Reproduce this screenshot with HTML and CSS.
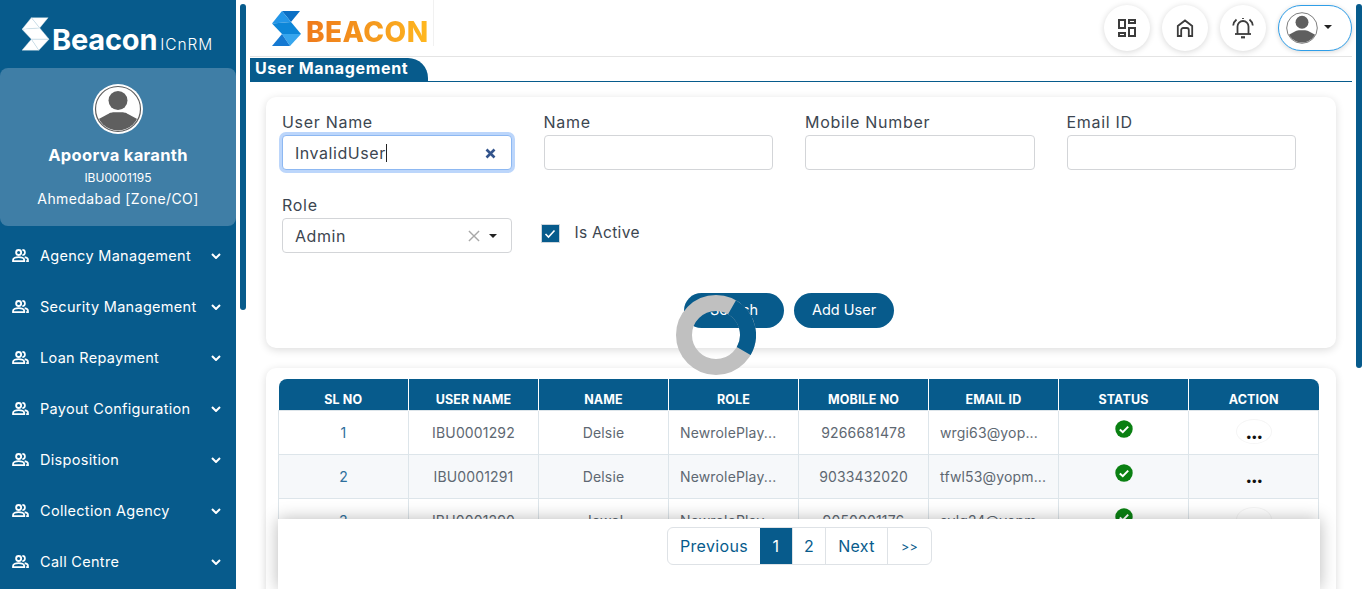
FILE: index.html
```html
<!DOCTYPE html>
<html lang="en">
<head>
    <meta charset="UTF-8">
    <meta name="viewport" content="width=device-width, initial-scale=1.0">
    <title>User Management</title>
    <link rel="stylesheet" href="styles.css">
</head>
<body>
<svg class="defs" width="0" height="0">
    <symbol id="people" viewBox="0 0 18 14">
        <circle cx="7" cy="3.800" r="2.700" fill="none" stroke="currentColor" stroke-width="2"/>
        <path d="M11 1a2.800 2.800 0 0 1 0 5.600" fill="none" stroke="currentColor" stroke-width="1.800"/>
        <path d="M1 13v-1.200c0-1.800 3-3 6-3s6 1.200 6 3V13z" fill="none" stroke="currentColor" stroke-width="2"/>
        <path d="M13.500 8.800c2 .3 3.600 1.300 3.600 3V13h-2" fill="none" stroke="currentColor" stroke-width="1.800"/>
    </symbol>
    <symbol id="chev" viewBox="0 0 10 6">
        <path d="M1 1l4 4 4-4" fill="none" stroke="currentColor" stroke-width="2"/>
    </symbol>
    <symbol id="avatar" viewBox="0 0 50 50">
        <defs><clipPath id="face"><circle cx="25" cy="25" r="21.500"/></clipPath></defs>
        <circle cx="25" cy="25" r="25" fill="#fff"/>
        <circle cx="25" cy="25" r="22.500" fill="#fff" stroke="#5f5f5f" stroke-width="1.200"/>
        <g clip-path="url(#face)" fill="#5f5f5f">
            <circle cx="25" cy="16.500" r="9.500"/>
            <path d="M0 38l16-8.500c2-1 3-1.200 9-1.200s7 .2 9 1.200L50 38v12H0z"/>
        </g>
    </symbol>
    <symbol id="tick" viewBox="0 0 18 18">
        <circle cx="9" cy="9" r="8.700" fill="#0a8012"/>
        <path d="M4.800 9.400l3 2.800 5.400-5.600" fill="none" stroke="#fff" stroke-width="2"/>
    </symbol>
</svg>

<div class="app">
    <aside class="sidebar">
        <div class="brand">
            <svg class="brand-mark" viewBox="0 0 30 35">
                <polygon points="10,0 28,0 19,11"/>
                <polygon points="10,0 19,11 0,12.500"/>
                <polygon points="0,12.500 19,11 29,23 10,23"/>
                <polygon points="29,23 10,23 18,35"/>
                <polygon points="10,23 0,35 18,35"/>
            </svg>
            <span class="brand-name">Beacon</span>
            <span class="brand-sub">ICnRM</span>
        </div>
        <div class="profile">
            <svg class="profile-pic"><use href="#avatar"/></svg>
            <div class="profile-name">Apoorva karanth</div>
            <div class="profile-id">IBU0001195</div>
            <div class="profile-loc">Ahmedabad [Zone/CO]</div>
        </div>
        <nav class="menu">
            <a class="menu-item"><svg class="menu-icon"><use href="#people"/></svg><span>Agency Management</span><svg class="menu-chev"><use href="#chev"/></svg></a>
            <a class="menu-item"><svg class="menu-icon"><use href="#people"/></svg><span>Security Management</span><svg class="menu-chev"><use href="#chev"/></svg></a>
            <a class="menu-item"><svg class="menu-icon"><use href="#people"/></svg><span>Loan Repayment</span><svg class="menu-chev"><use href="#chev"/></svg></a>
            <a class="menu-item"><svg class="menu-icon"><use href="#people"/></svg><span>Payout Configuration</span><svg class="menu-chev"><use href="#chev"/></svg></a>
            <a class="menu-item"><svg class="menu-icon"><use href="#people"/></svg><span>Disposition</span><svg class="menu-chev"><use href="#chev"/></svg></a>
            <a class="menu-item"><svg class="menu-icon"><use href="#people"/></svg><span>Collection Agency</span><svg class="menu-chev"><use href="#chev"/></svg></a>
            <a class="menu-item"><svg class="menu-icon"><use href="#people"/></svg><span>Call Centre</span><svg class="menu-chev"><use href="#chev"/></svg></a>
        </nav>
    </aside>
    <div class="scroll-side"><div class="scroll-thumb thumb-side"></div></div>

    <main class="main">
        <header class="topbar">
            <div class="logo">
                <svg class="logo-mark" viewBox="0 0 30 35">
                    <polygon fill="#0b6fc4" points="10,0 28,0 19,11"/>
                    <polygon fill="#2396e8" points="10,0 19,11 0,12.500"/>
                    <polygon fill="#0d86d8" points="0,12.500 19,11 29,23 10,23"/>
                    <polygon fill="#37a6ee" points="29,23 10,23 18,35"/>
                    <polygon fill="#1579d2" points="10,23 0,35 18,35"/>
                </svg>
                <span class="logo-text">BEACON</span>
            </div>
            <div class="top-actions">
                <button class="round-btn">
                    <svg width="18" height="18" viewBox="0 0 18 18" fill="none" stroke="#3c3c3c" stroke-width="2"><rect x="1" y="1" width="6" height="8"/><rect x="11" y="1" width="6" height="3"/><rect x="1" y="14" width="6" height="3"/><rect x="11" y="9" width="6" height="8"/></svg>
                </button>
                <button class="round-btn">
                    <svg width="18" height="18" viewBox="0 0 18 18" fill="none" stroke="#3c3c3c" stroke-width="1.800"><path d="M1.800 17V7L9 1.500 16.200 7v10h-3.400v-6a2 2 0 0 0-2-2H7.200a2 2 0 0 0-2 2v6z"/></svg>
                </button>
                <button class="round-btn">
                    <svg width="22" height="22" viewBox="0 0 22 22" fill="none" stroke="#3c3c3c" stroke-width="1.800"><path d="M5.500 17V9.500a5.500 5.500 0 0 1 11 0V17"/><path d="M3 17h16"/><path d="M9 20.300h4" stroke-width="2.200"/><path d="M11 2V1"/><path d="M4.500 2.500A9 9 0 0 0 1.200 8.500M17.500 2.500a9 9 0 0 1 3.300 6"/></svg>
                </button>
                <button class="user-btn">
                    <svg class="user-pic"><use href="#avatar"/></svg>
                    <span class="caret"></span>
                </button>
            </div>
        </header>

        <div class="title-row"><h1 class="page-title">User Management</h1></div>

        <section class="card filter-card">
            <div class="filter-form">
                <div class="filter-grid">
                    <div class="field">
                        <label>User Name</label>
                        <div class="input focused"><span class="input-val">InvalidUser</span><span class="cursor"></span>
                            <svg class="clear" width="11" height="11" viewBox="0 0 11 11"><path d="M1.500 1.500l8 8M9.500 1.500l-8 8" stroke="#33548c" stroke-width="2.600"/></svg>
                        </div>
                    </div>
                    <div class="field"><label>Name</label><div class="input"></div></div>
                    <div class="field"><label>Mobile Number</label><div class="input"></div></div>
                    <div class="field"><label>Email ID</label><div class="input"></div></div>
                    <div class="field">
                        <label>Role</label>
                        <div class="input"><span class="input-val">Admin</span>
                            <svg class="select-x" width="12" height="12" viewBox="0 0 13 13"><path d="M1 1l11 11M12 1L1 12" stroke="#a8a8a8" stroke-width="1.500"/></svg>
                            <span class="caret select-caret"></span>
                        </div>
                    </div>
                    <div class="check-field">
                        <span class="checkbox"><svg width="12" height="10" viewBox="0 0 12 10"><path d="M1.500 5l3 3 6-6.500" fill="none" stroke="#fff" stroke-width="1.600"/></svg></span>
                        <span class="check-label">Is Active</span>
                    </div>
                </div>
                <div class="form-actions">
                    <button class="btn">Search</button>
                    <button class="btn">Add User</button>
                </div>
            </div>
        </section>

        <section class="card table-card">
            <table class="grid">
                <thead>
                    <tr><th>SL NO</th><th>USER NAME</th><th>NAME</th><th>ROLE</th><th>MOBILE NO</th><th>EMAIL ID</th><th>STATUS</th><th>ACTION</th></tr>
                </thead>
                <tbody>
                    <tr>
                        <td class="link">1</td><td>IBU0001292</td><td>Delsie</td><td class="left">NewrolePlay...</td><td>9266681478</td><td class="left">wrgi63@yop...</td>
                        <td class="status"><svg class="tick"><use href="#tick"/></svg></td>
                        <td class="action"><span class="dots dots-ring">•••</span></td>
                    </tr>
                    <tr>
                        <td class="link">2</td><td>IBU0001291</td><td>Delsie</td><td class="left">NewrolePlay...</td><td>9033432020</td><td class="left">tfwl53@yopm...</td>
                        <td class="status"><svg class="tick"><use href="#tick"/></svg></td>
                        <td class="action"><span class="dots">•••</span></td>
                    </tr>
                    <tr>
                        <td class="link">3</td><td>IBU0001290</td><td>Jewel</td><td class="left">NewrolePlay...</td><td>9050001176</td><td class="left">sylg24@yopm...</td>
                        <td class="status"><svg class="tick"><use href="#tick"/></svg></td>
                        <td class="action"><span class="dots dots-ring">•••</span></td>
                    </tr>
                </tbody>
            </table>
        </section>

        <div class="pager-bar">
            <div class="pager">
                <a class="pg pg-prev">Previous</a>
                <a class="pg pg-num active">1</a>
                <a class="pg pg-num">2</a>
                <a class="pg pg-next">Next</a>
                <a class="pg pg-last">&gt;&gt;</a>
            </div>
        </div>

        <svg class="spinner" width="80" height="80" viewBox="0 0 80 80">
            <circle cx="40" cy="40" r="32" fill="none" stroke="#c0c0c0" stroke-width="16"/>
            <circle class="spinner-arc" cx="40" cy="40" r="32" fill="none" stroke="#075b8c" stroke-width="16" stroke-dasharray="50.300 151"/>
        </svg>
    </main>
    <div class="scroll-main"><div class="scroll-thumb thumb-main"></div></div>
</div>
</body>
</html>
```

FILE: styles.css
```css
/* Page frame */
* {
    box-sizing: border-box;
}
html, body {
    height: 100%;
}
body {
    margin: 0;
    font-family: Inter, "Open Sans", sans-serif;
    color: #3c4650;
    background: #fff;
    overflow: hidden;
}
.defs {
    position: absolute;
}
.app {
    display: flex;
    height: 100vh;
    overflow: hidden;
}

/* Sidebar */
.sidebar {
    width: 236px;
    flex: none;
    background: #075b8c;
    color: #fff;
    overflow: hidden;
}
.brand {
    height: 68px;
    display: flex;
    align-items: flex-end;
    padding: 0 0 17px 22px;
}
.brand-mark {
    width: 28px;
    height: 34px;
    fill: #fff;
    stroke: #cfe0ea;
    stroke-width: 0.400;
    flex: none;
}
.brand-name {
    font-size: 29px;
    font-weight: 700;
    line-height: 30px;
    margin: 0 0 -4px 2px;
    letter-spacing: -0.200px;
}
.brand-sub {
    font-size: 15.500px;
    font-weight: 300;
    margin: 0 0 -5px 3px;
    line-height: 22px;
    letter-spacing: 0.900px;
}
.profile {
    height: 158px;
    background: #3f7ea6;
    border-radius: 8px;
    display: flex;
    flex-direction: column;
    align-items: center;
    padding-top: 16px;
}
.profile-pic {
    width: 50px;
    height: 50px;
}
.profile-name {
    font-size: 16.500px;
    font-weight: 700;
    margin-top: 11px;
    line-height: 20px;
    letter-spacing: 0.300px;
}
.profile-id {
    font-size: 12px;
    margin-top: 4px;
    line-height: 18px;
}
.profile-loc {
    font-size: 14px;
    margin-top: 2px;
    line-height: 20px;
    letter-spacing: 0.400px;
}
.menu {
    padding-top: 4px;
}
.menu-item {
    display: flex;
    align-items: center;
    height: 51px;
    padding: 0 15px 0 12px;
    font-size: 14.500px;
    letter-spacing: 0.300px;
}
.menu-icon {
    width: 17px;
    height: 13px;
    margin-right: 11px;
    flex: none;
}
.menu-chev {
    width: 10px;
    height: 6px;
    margin-left: auto;
    flex: none;
}

/* Scrollbars */
.scroll-side {
    width: 14px;
    flex: none;
    padding: 4px 4px 0;
}
.scroll-main {
    width: 14px;
    flex: none;
    padding: 4px 4px 0;
}
.scroll-thumb {
    width: 6px;
    background: #075b8c;
    border-radius: 3px;
}
.thumb-side {
    height: 306px;
}
.thumb-main {
    height: 364px;
}

/* Main column */
.main {
    position: relative;
    flex: 1;
    min-width: 0;
}
.topbar {
    height: 57px;
    display: flex;
    align-items: flex-start;
    justify-content: space-between;
    border-bottom: 1px solid #e4e4e4;
}
.logo {
    display: flex;
    align-items: center;
    height: 46px;
    width: 184px;
    padding: 10px 0 0 22px;
    border-right: 1px solid #f1f1f1;
}
.logo-mark {
    width: 30px;
    height: 35px;
    flex: none;
}
.logo-text {
    font-size: 28px;
    font-weight: 800;
    margin: 8px 0 0 4px;
    letter-spacing: 0.450px;
    background: linear-gradient(90deg, #ef7a1c, #f59a1e 55%, #ffb81f);
    -webkit-background-clip: text;
    background-clip: text;
    color: transparent;
}
.top-actions {
    display: flex;
    gap: 12px;
    padding-top: 5px;
}
.round-btn {
    width: 46px;
    height: 46px;
    border: 0;
    border-radius: 50%;
    background: #fff;
    box-shadow: 0 1px 6px rgba(0, 0, 0, 0.16);
    display: flex;
    align-items: center;
    justify-content: center;
    padding: 0;
}
.user-btn {
    width: 74px;
    height: 46px;
    margin-left: 0;
    border: 1px solid #2f9ee8;
    border-radius: 23px;
    background: #fff;
    box-shadow: 0 1px 5px rgba(0, 0, 0, 0.16);
    display: flex;
    align-items: center;
    padding: 0 0 0 6px;
}
.user-pic {
    width: 34px;
    height: 34px;
}
.caret {
    width: 0;
    height: 0;
    border-left: 4px solid transparent;
    border-right: 4px solid transparent;
    border-top: 4px solid #222;
    margin: -2px 0 0 5px;
}
.title-row {
    margin-top: 1px;
    height: 24px;
    border-bottom: 1px solid #075b8c;
}
.page-title {
    display: inline-block;
    margin: 0;
    width: 178px;
    height: 23px;
    padding-left: 5px;
    background: #075b8c;
    color: #fff;
    font-size: 16px;
    font-weight: 700;
    line-height: 20px;
    letter-spacing: 0.650px;
    border-top-right-radius: 20px;
}

/* Cards */
.card {
    margin: 15px 16px 0;
    background: #fff;
    border-radius: 10px;
    box-shadow: 0 2px 8px rgba(0, 0, 0, 0.14);
}
.filter-card {
    height: 251px;
    padding: 16px;
}
.filter-form {
    width: 1014px;
}
.filter-grid {
    display: grid;
    grid-template-columns: repeat(4, 229.500px);
    column-gap: 32px;
    row-gap: 26px;
}
.field label {
    display: block;
    font-size: 16px;
    line-height: 18px;
    height: 19px;
    margin-bottom: 3px;
    letter-spacing: 0.700px;
}
.input {
    height: 35px;
    border: 1px solid #d3d5d8;
    border-radius: 4px;
    display: flex;
    align-items: center;
    padding: 0 17px 0 12px;
    font-size: 16px;
    letter-spacing: 0.550px;
    background: #fff;
}
.input.focused {
    border-color: #8db8f2;
    box-shadow: 0 0 0 3px #bcd6fb;
}
.input-val {
    line-height: 20px;
    padding-top: 1px;
}
.cursor {
    width: 1px;
    height: 18px;
    background: #222;
}
.clear {
    margin: 2px -2px 0 auto;
}
.select-x {
    margin-left: auto;
}
.select-caret {
    margin: 0 -3px 0 9px;
}
.check-field {
    display: flex;
    align-items: center;
    padding-top: 21px;
    align-self: start;
    height: 54px;
}
.checkbox {
    width: 19px;
    height: 19px;
    background: #075b8c;
    border: 1px solid #cfd6dc;
    display: flex;
    align-items: center;
    justify-content: center;
    margin-left: -3px;
}
.check-label {
    font-size: 15.500px;
    margin: -2px 0 0 15px;
    letter-spacing: 0.300px;
}
.form-actions {
    display: flex;
    justify-content: center;
    gap: 10px;
    margin-top: 40px;
}
.btn {
    width: 100px;
    height: 35px;
    border: 0;
    border-radius: 18px;
    background: #075b8c;
    color: #fff;
    font-family: inherit;
    font-size: 14.500px;
    padding: 0 0 2px;
}

/* Table */
.table-card {
    margin-top: 20px;
    height: 300px;
    padding: 11px 13px;
    margin-bottom: 0;
}
.grid {
    width: 1041px;
    margin-left: -1px;
    table-layout: fixed;
    border-collapse: collapse;
    font-size: 14px;
    letter-spacing: 0.150px;
}
.grid th {
    height: 31px;
    background: #075b8c;
    color: #fff;
    font-size: 12.500px;
    font-weight: 700;
    vertical-align: bottom;
    padding: 0 0 3px;
    border-left: 1px solid #fff;
}
.grid th:first-child {
    border-left: 0;
    border-top-left-radius: 8px;
}
.grid th:last-child {
    border-top-right-radius: 8px;
}
.grid td {
    height: 44px;
    text-align: center;
    border: 1px solid #dde5ea;
    padding: 0;
    color: #5e6872;
    white-space: nowrap;
    overflow: hidden;
}
.grid td.left {
    text-align: left;
    padding-left: 11px;
}
.grid tbody tr:nth-child(even) td {
    background: #f6f8fa;
}
.grid td.link {
    color: #2d6f9c;
}
.grid td.status {
    vertical-align: top;
    padding-top: 9px;
}
.tick {
    width: 18px;
    height: 18px;
    display: block;
    margin: 0 auto;
}
.grid td.action {
    vertical-align: top;
    padding-top: 8px;
}
.dots {
    display: block;
    width: 36px;
    height: 25px;
    margin: 0 auto;
    border-radius: 50%;
    border: 1px solid transparent;
    color: #111;
    font-family: "DejaVu Sans", sans-serif;
    font-size: 12px;
    line-height: 36px;
    letter-spacing: -1.500px;
}
.dots-ring {
    border-color: #f5f5f5;
}

/* Pagination overlay */
.pager-bar {
    position: absolute;
    left: 28px;
    top: 519px;
    width: 1042px;
    height: 70px;
    background: #fff;
    padding-top: 8px;
    display: flex;
    justify-content: center;
    box-shadow: 0 0 16px rgba(0, 0, 0, 0.28);
}
.pager {
    display: flex;
    height: 38px;
    border: 1px solid #dee2e6;
    border-radius: 6px;
    color: #075b8c;
    font-size: 16px;
    letter-spacing: 0.350px;
    overflow: hidden;
    margin-left: 1px;
}
.pg {
    display: flex;
    align-items: center;
    justify-content: center;
    border-left: 1px solid #dee2e6;
}
.pg-prev {
    width: 92px;
    border-left: 0;
}
.pg-num {
    width: 33px;
}
.pg-num.active {
    width: 32px;
}
.pg-next {
    width: 62px;
}
.pg-last {
    width: 44px;
    font-size: 12.500px;
}
.pg.active {
    background: #075b8c;
    color: #fff;
    border-left: 0;
}

/* Loader on top of the page */
.spinner {
    position: absolute;
    left: 426px;
    top: 295px;
}
.spinner-arc {
    transform: rotate(-60deg);
    transform-origin: 40px 40px;
}
```
